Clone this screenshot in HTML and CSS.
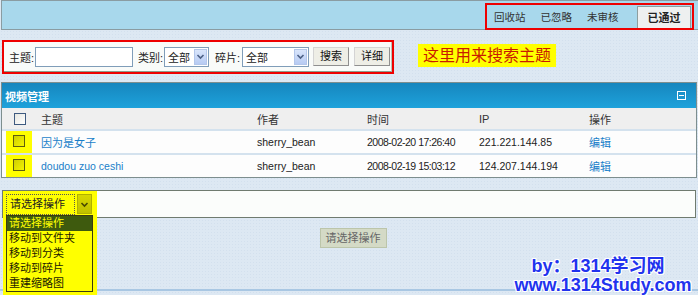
FILE: index.html
```html
<!DOCTYPE html>
<html lang="zh">
<head>
<meta charset="utf-8">
<title>视频管理</title>
<link rel="stylesheet" href="styles.css">
</head>
<body>
<div class="topbar">
  <div class="tabs">
    <span class="tab">回收站</span>
    <span class="tab">已忽略</span>
    <span class="tab">未审核</span>
    <span class="tab active">已通过</span>
  </div>
</div>

<div class="search-row">
  <div class="search-annot">
    <div class="searchbox">
      <span class="lbl">主题:</span>
      <span class="input"></span>
      <span class="lbl l2">类别:</span>
      <span class="sel s1"><span class="sel-text">全部</span><span class="arr"><svg width="9" height="7" viewBox="0 0 9 7"><polyline points="1.5,2 4.5,5 7.5,2" fill="none" stroke="#4d6185" stroke-width="1.6"/></svg></span></span>
      <span class="lbl l3">碎片:</span>
      <span class="sel s2"><span class="sel-text">全部</span><span class="arr"><svg width="9" height="7" viewBox="0 0 9 7"><polyline points="1.5,2 4.5,5 7.5,2" fill="none" stroke="#4d6185" stroke-width="1.6"/></svg></span></span>
      <span class="btn b1">搜索</span>
      <span class="btn b2">详细</span>
    </div>
  </div>
  <div class="note">这里用来搜索主题</div>
</div>

<div class="panel">
  <div class="panel-head">
    <span class="panel-title">视频管理</span>
    <span class="collapse"></span>
  </div>
  <table class="grid">
    <colgroup>
      <col class="w1"><col class="w2"><col class="w3"><col class="w4"><col class="w5"><col>
    </colgroup>
    <tr class="thead">
      <td class="c1"><span class="cb"></span></td>
      <td class="c2">主题</td>
      <td class="cx">作者</td>
      <td class="cx">时间</td>
      <td class="cx">IP</td>
      <td class="cx">操作</td>
    </tr>
    <tr class="row">
      <td class="c1 hl"><span class="hlbox"><span class="cb y"></span></span></td>
      <td class="c2"><a class="lnk">因为是女子</a></td>
      <td class="cx lat">sherry_bean</td>
      <td class="cx lat date">2008-02-20 17:26:40</td>
      <td class="cx lat">221.221.144.85</td>
      <td class="cx"><a class="lnk">编辑</a></td>
    </tr>
    <tr class="row">
      <td class="c1 hl"><span class="hlbox"><span class="cb y"></span></span></td>
      <td class="c2"><a class="lnk lat">doudou zuo ceshi</a></td>
      <td class="cx lat">sherry_bean</td>
      <td class="cx lat date">2008-02-19 15:03:12</td>
      <td class="cx lat">124.207.144.194</td>
      <td class="cx"><a class="lnk">编辑</a></td>
    </tr>
  </table>
</div>

<div class="action-bar">
  <div class="opsel">
    <span class="op-text">请选择操作</span>
    <span class="op-arr"><svg width="9" height="7" viewBox="0 0 9 7"><polyline points="1.5,2 4.5,5 7.5,2" fill="none" stroke="#4a4a00" stroke-width="1.6"/></svg></span>
    <div class="dropdown">
      <ul class="list">
        <li class="on">请选择操作</li>
        <li>移动到文件夹</li>
        <li>移动到分类</li>
        <li>移动到碎片</li>
        <li>重建缩略图</li>
      </ul>
    </div>
  </div>
</div>

<div class="submit-row"><span class="submit">请选择操作</span></div>
<div class="footer-line"></div>

<div class="wm">
  <div class="wm1">by：1314学习网</div>
  <div class="wm2">www.1314Study.com</div>
</div>
</body>
</html>
```

FILE: styles.css
```css
html, body {
  margin: 0;
  padding: 0;
}
body {
  position: relative;
  width: 698px;
  height: 295px;
  overflow: hidden;
  background-color: #dde8f3;
  background-image: radial-gradient(#d3e0ee 0.6px, transparent 0.8px);
  background-size: 3px 3px;
  font-family: "Liberation Sans", "Noto Sans CJK SC", sans-serif;
  font-size: 11px;
  color: #222;
}

/* top bar */
.topbar {
  height: 28px;
  margin-left: 1px;
  border: 1px solid #8a9ca2;
  border-right: none;
  background: #a8d8ec;
  display: flex;
  justify-content: flex-end;
  align-items: flex-start;
}
.tabs {
  box-sizing: border-box;
  margin-top: 2px;
  margin-right: 4px;
  width: 209px;
  height: 27px;
  border: 2px solid #ee0000;
  display: flex;
  align-items: flex-end;
  padding-left: 7px;
  gap: 15px;
}
.tab {
  font-size: 10.5px;
  color: #333;
  line-height: 12px;
  padding-bottom: 5px;
  white-space: nowrap;
}
.tab.active {
  margin-left: auto;
  margin-right: 1px;
  box-sizing: border-box;
  width: 54px;
  height: 22px;
  padding: 0;
  line-height: 22px;
  text-align: center;
  background: #eef0f0;
  border: 1px solid #8e9e9e;
  border-bottom: none;
  font-weight: bold;
  font-size: 11px;
  color: #222;
}

/* search */
.search-row {
  margin-top: 10px;
  display: flex;
  align-items: flex-start;
}
.search-annot {
  box-sizing: border-box;
  margin-left: 2px;
  width: 392px;
  height: 34px;
  border: 2px solid #ee0000;
}
.searchbox {
  box-sizing: border-box;
  height: 30px;
  background: #f9fbf9;
  border-bottom: 1px solid #8c9c8c;
  border-right: 1px solid #b8c4b8;
  display: flex;
  align-items: center;
  padding-left: 5px;
}
.lbl {
  color: #222;
  white-space: nowrap;
  width: 24px;
}
.input {
  box-sizing: border-box;
  margin-left: 2px;
  width: 98px;
  height: 20px;
  background: #fff;
  border: 1px solid #7f9db9;
}
.l2 { margin-left: 5px; }
.l3 { margin-left: 6px; }
.sel {
  box-sizing: border-box;
  margin-left: 2px;
  height: 20px;
  background: #fff;
  border: 1px solid #7f9db9;
  display: flex;
  align-items: center;
  justify-content: space-between;
  padding: 1px 1px 1px 3px;
}
.s1 { width: 45px; }
.s2 { width: 67px; margin-left: 3px; }
.arr {
  box-sizing: border-box;
  width: 13px;
  height: 16px;
  background: linear-gradient(#d9e5fb, #b7cbf3);
  border: 1px solid #b3c6ea;
  display: flex;
  align-items: center;
  justify-content: center;
}
.btn {
  box-sizing: border-box;
  width: 36px;
  height: 19px;
  line-height: 17px;
  text-align: center;
  background: #eeeee6;
  border: 1px solid #8f8f8f;
  border-top-color: #d4d4d4;
  border-left-color: #d4d4d4;
  color: #111;
}
.b1 { margin-left: 4px; }
.b2 { margin-left: 5px; }
.note {
  margin-left: 24px;
  margin-top: 4px;
  width: 138px;
  height: 23px;
  line-height: 23px;
  background: #ffff00;
  color: #c81c00;
  font-size: 16px;
  text-align: center;
  white-space: nowrap;
}

/* panel */
.panel {
  margin: 8px 1px 0 1px;
  border: 1px solid #7d8e8e;
  background: #fdfdfd;
}
.panel-head {
  height: 25px;
  background: linear-gradient(#1686be, #1ea2db);
  display: flex;
  align-items: center;
  justify-content: space-between;
  padding: 0 10px 0 3px;
}
.panel-title {
  color: #fff;
  font-weight: bold;
  font-size: 11px;
}
.collapse {
  position: relative;
  box-sizing: border-box;
  width: 9px;
  height: 9px;
  border: 1px solid #fff;
}
.collapse::after {
  content: "";
  position: absolute;
  left: 1px;
  right: 1px;
  top: 3px;
  height: 1px;
  background: #fff;
}
.grid {
  width: 100%;
  border-collapse: collapse;
  table-layout: fixed;
}
.w1 { width: 31px; }
.w2 { width: 217px; }
.w3 { width: 110px; }
.w4 { width: 112px; }
.w5 { width: 110px; }
.grid td {
  box-sizing: border-box;
  padding: 0;
  white-space: nowrap;
  vertical-align: middle;
  overflow: visible;
}
.thead td {
  height: 22px;
  background: #efefef;
  color: #333;
}
.row td {
  height: 22px;
  border-top: 2px solid #d4e2ee;
  background: #fdfdfd;
}
.row:last-child td { height: 21px; }
.grid td.c1 { padding-left: 12px; }
.grid td.c2 { padding-left: 8px; }
.grid td.cx { padding-left: 7px; }
.grid .row td.c1.hl { padding-left: 4px; }
.hlbox {
  display: flex;
  align-items: center;
  justify-content: center;
  width: 26px;
  height: 24px;
  margin-top: -2px;
  background: #ffff00;
}
.cb {
  display: block;
  box-sizing: border-box;
  width: 12px;
  height: 12px;
  border: 1px solid #3e5a80;
  background: linear-gradient(135deg, #e6e6e0, #ffffff);
}
.cb.y {
  border-color: #5e5e10;
  background: linear-gradient(135deg, #cfcf00, #f4f400);
}
.lat { font-size: 10.5px; }
.date { letter-spacing: -0.5px; }
.lnk {
  color: #1a7fc9;
  text-decoration: none;
}

/* action bar */
.action-bar {
  box-sizing: border-box;
  margin: 12px 2px 0 2px;
  height: 28px;
  background: #fbfdfb;
  border: 1px solid #6f7b6f;
  display: flex;
  align-items: stretch;
}
.opsel {
  position: relative;
  width: 94px;
  background: #ffff00;
  display: flex;
  align-items: center;
  padding-left: 3px;
  box-sizing: border-box;
}
.op-text {
  box-sizing: border-box;
  width: 69px;
  height: 21px;
  line-height: 19px;
  padding-left: 3px;
  border: 1px dotted #555;
  color: #222;
  font-size: 11px;
}
.op-arr {
  box-sizing: border-box;
  margin-left: 2px;
  width: 15px;
  height: 20px;
  background: linear-gradient(#d8d800, #c0c000);
  border: 1px solid #b0b000;
  display: flex;
  align-items: center;
  justify-content: center;
}
.dropdown {
  position: absolute;
  left: 0;
  top: 24px;
  width: 94px;
  height: 80px;
  background: #ffff00;
  padding: 0 4px 0 3px;
  box-sizing: border-box;
  z-index: 2;
}
.list {
  list-style: none;
  margin: 0;
  padding: 0;
  border: 1px solid #3b3b10;
  background: #ffff00;
}
.list li {
  height: 15px;
  line-height: 15px;
  padding-left: 2px;
  color: #1a1a00;
  font-size: 11px;
  white-space: nowrap;
}
.list li.on {
  background: #3e5a0e;
  color: #ffff00;
}

.submit-row {
  margin-top: 10px;
  display: flex;
  justify-content: center;
  padding-left: 8px;
}
.submit {
  box-sizing: border-box;
  width: 67px;
  height: 20px;
  line-height: 18px;
  text-align: center;
  background: #d4dac6;
  border: 1px solid #bcc5aa;
  color: #666;
}
.footer-line {
  margin-top: 41px;
  height: 2px;
  background: #a9c7e3;
}

/* watermark */
.wm {
  position: absolute;
  right: 5px;
  bottom: 0;
  width: 180px;
  text-align: center;
  font-family: "Liberation Sans", "Noto Sans CJK SC", sans-serif;
  font-weight: bold;
  color: #2233ee;
  text-shadow: 1px 0 0 #fff, -1px 0 0 #fff, 0 1px 0 #fff, 0 -1px 0 #fff, 1px 1px 0 #fff, -1px -1px 0 #fff, 1px -1px 0 #fff, -1px 1px 0 #fff;
}
.wm1 {
  font-size: 18px;
  line-height: 20px;
  margin-right: 10px;
}
.wm2 {
  font-size: 18px;
  line-height: 19px;
}
```
